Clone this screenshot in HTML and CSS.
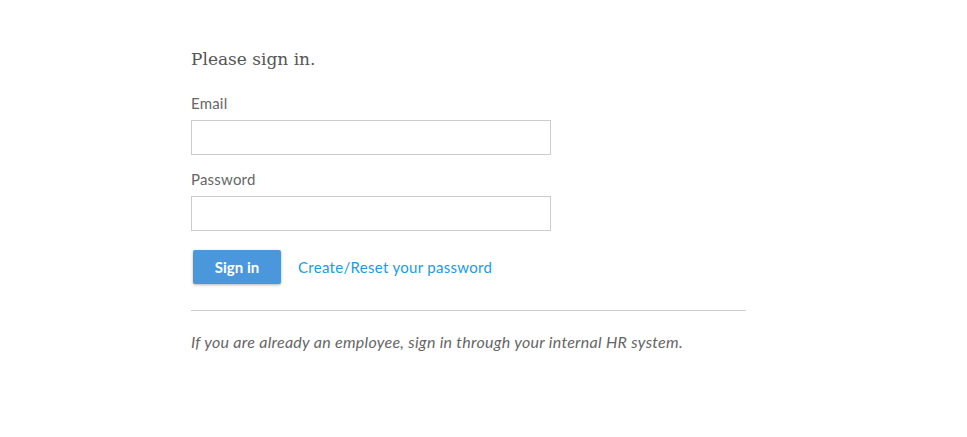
FILE: index.html
```html
<!DOCTYPE html>
<html lang="en">
<head>
  <meta charset="UTF-8" />
  <meta name="viewport" content="width=device-width, initial-scale=1.0"/>
  <title>Sign in</title>
  <link rel="stylesheet" href="styles.css">
</head>
<body>

  <div class="signin">
    <h1>Please sign in.</h1>

    <form class="signin-form">
      <label for="email">Email</label>
      <input type="text" id="email" />

      <label for="password">Password</label>
      <input type="password" id="password" />

      <div class="actions">
        <button type="button">Sign in</button>
        <a href="#">Create/Reset your password</a>
      </div>
    </form>

    <hr>

    <p class="note">If you are already an employee, sign in through your internal HR system.</p>
  </div>

</body>
</html>
```

FILE: styles.css
```css
body {
  font-family: Lato, "Open Sans", sans-serif;
  margin: 0;
  padding: 0;
  background-color: #fff;
  color: #666;
}

.signin {
  width: 555px;
  margin-left: 191px;
  padding-top: 49px;
}

h1 {
  font-family: "DejaVu Serif", serif;
  font-weight: normal;
  font-size: 17px;
  color: #555;
  margin: 0 0 25px;
}

.signin-form label {
  display: block;
  font-size: 15px;
  line-height: 19px;
  letter-spacing: 0.2px;
  margin-bottom: 7px;
}

.signin-form input {
  display: block;
  box-sizing: border-box;
  width: 360px;
  height: 35px;
  border: 1px solid #ccc;
  margin: 0 0 15px;
  padding: 5px 8px;
}

.actions {
  display: flex;
  align-items: center;
  gap: 17px;
  margin-top: 19px;
  padding-left: 2px;
}

.actions button {
  background-color: #4a97db;
  color: white;
  border: none;
  border-radius: 2px;
  width: 88px;
  height: 34px;
  font-family: Lato, sans-serif;
  font-size: 15px;
  font-weight: bold;
  box-shadow: 0 1px 3px rgba(0,0,0,0.3);
  cursor: pointer;
}

.actions a {
  color: #1a9be4;
  font-size: 15px;
  letter-spacing: 0.3px;
  text-decoration: none;
}

hr {
  border: none;
  border-top: 1px solid #ccc;
  margin: 26px 0 0;
}

.note {
  font-style: italic;
  font-size: 16px;
  letter-spacing: 0.28px;
  margin: 21px 0 0;
}
```
